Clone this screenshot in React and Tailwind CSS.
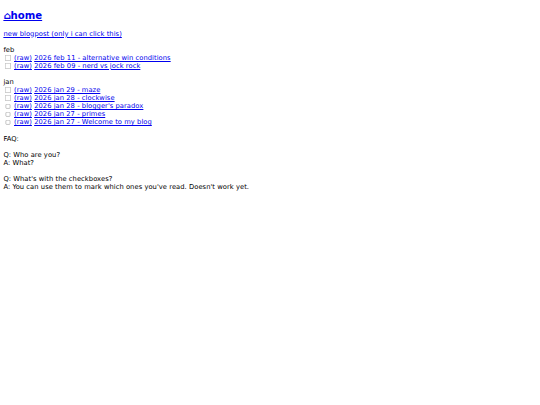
import React from "react";

const feb = [
  "2026 feb 11 - alternative win conditions",
  "2026 feb 09 - nerd vs jock rock",
];
const jan = [
  "2026 jan 29 - maze",
  "2026 jan 28 - clockwise",
  "2026 jan 28 - blogger's paradox",
  "2026 jan 27 - primes",
  "2026 jan 27 - Welcome to my blog",
];

const A = ({ children }) => (
  <a href="#" className="text-[#0000ee] underline">
    {children}
  </a>
);

const Row = ({ title }) => (
  <>
    <input type="checkbox" className="m-[3px_3px_3px_4px] align-[-2px]" />{" "}
    <A>(raw)</A> <A>{title}</A>
    <br />
  </>
);

export default function App() {
  return (
    <div className="bg-white min-h-[405px] flow-root">
      <div className="[zoom:0.421875] m-2 text-[16px] leading-[normal] tracking-[0.1px] text-black font-['DejaVu_Sans',sans-serif]">
        <h2 className="text-[24px] font-bold mt-[24.6px] mb-[19.92px] leading-[normal] tracking-normal">
          <A>⌂home</A>
        </h2>
        <A>new blogpost (only i can click this)</A>
        <br />
        <br />
        feb
        <br />
        {feb.map((t) => (
          <Row key={t} title={t} />
        ))}
        <br />
        jan
        <br />
        {jan.map((t) => (
          <Row key={t} title={t} />
        ))}
        <br />
        FAQ:
        <br />
        <br />
        Q: Who are you?
        <br />
        A: What?
        <br />
        <br />
        Q: What's with the checkboxes?
        <br />
        A: You can use them to mark which ones you've read. Doesn't work yet.
      </div>
    </div>
  );
}
